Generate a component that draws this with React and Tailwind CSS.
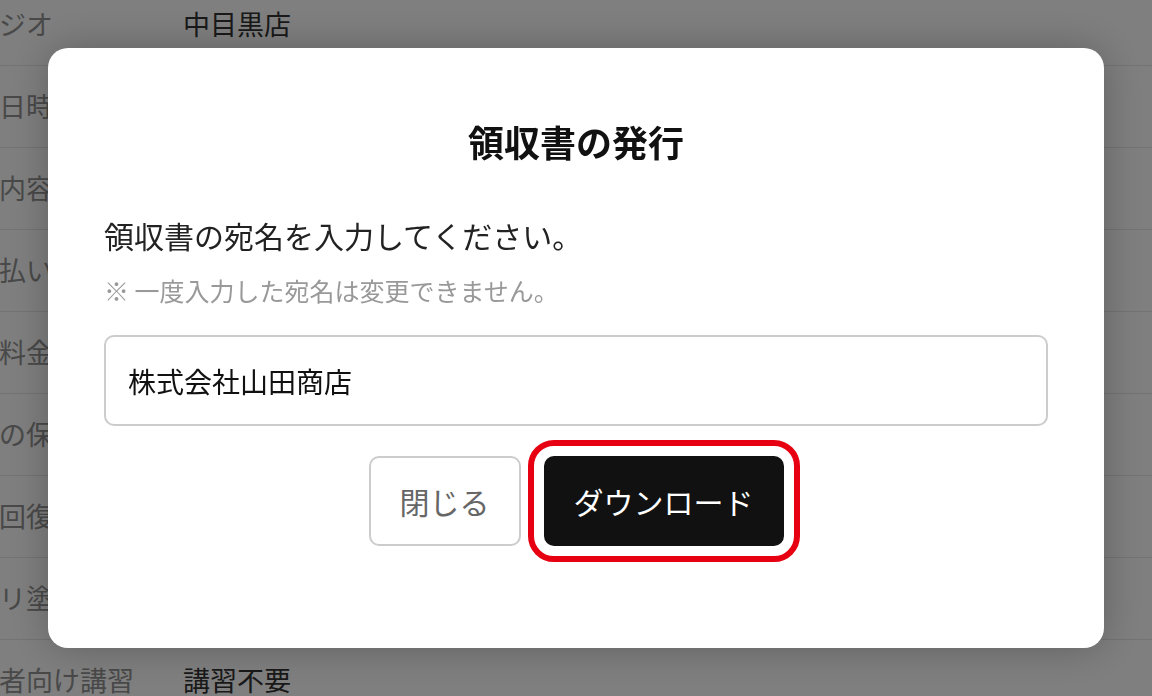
const rows = [
  { label: "スタジオ", value: "中目黒店" },
  { label: "利用日時", value: "2024年5月18日 14:00" },
  { label: "利用内容", value: "撮影" },
  { label: "お支払い", value: "クレジットカード" },
  { label: "利用料金", value: "¥12,000" },
  { label: "写真の保存", value: "あり" },
  { label: "疲労回復", value: "なし" },
  { label: "上塗リ塗装", value: "なし" },
  { label: "初心者向け講習", value: "講習不要" },
];

function ReceiptModal() {
  return (
    <div className="fixed inset-0 flex items-start justify-center bg-black/50 px-12 pt-12">
      <div className="flex w-full flex-col rounded-[20px] bg-white px-14 pb-[102px] pt-[68px] shadow-[0_0_40px_rgba(0,0,0,0.25)]">
        <h2 className="text-center text-[36px] font-bold leading-[51px] text-[#111]">領収書の発行</h2>
        <p className="mt-[47px] text-[30px] leading-[42px] text-[#222]">領収書の宛名を入力してください。</p>
        <p className="mt-[17px] text-[25px] leading-[34px] text-[#999]">※ 一度入力した宛名は変更できません。</p>
        <input
          type="text"
          readOnly
          value="株式会社山田商店"
          className="mt-[28px] h-[91px] w-full rounded-[10px] border-2 border-[#ccc] px-[22px] text-[28px] text-[#111] outline-none"
        />
        <div className="mt-[30px] flex justify-center gap-[23px]">
          <button
            type="button"
            className="h-[90px] w-[152px] rounded-[10px] border-2 border-[#ccc] bg-white text-[30px] text-[#666]"
          >
            閉じる
          </button>
          <button
            type="button"
            className="h-[90px] w-[240px] rounded-[10px] bg-[#111] text-[30px] text-white outline-[6px] outline-offset-[10px] outline-solid outline-[#e60012]"
          >
            ダウンロード
          </button>
        </div>
      </div>
    </div>
  );
}

export default function App() {
  return (
    <div className="h-[696px] overflow-hidden bg-white font-['Noto_Sans_CJK_JP',sans-serif]">
      <div className="-ml-[55px] -mt-[16px]">
        {rows.map((r) => (
          <div
            key={r.label}
            className="grid h-[82px] grid-cols-[238px_1fr] items-center border-b border-[#e6e6e6] text-[27px]"
          >
            <span className="whitespace-nowrap text-[#929292]">{r.label}</span>
            <span className="whitespace-nowrap text-[#333]">{r.value}</span>
          </div>
        ))}
      </div>
      <ReceiptModal />
    </div>
  );
}
